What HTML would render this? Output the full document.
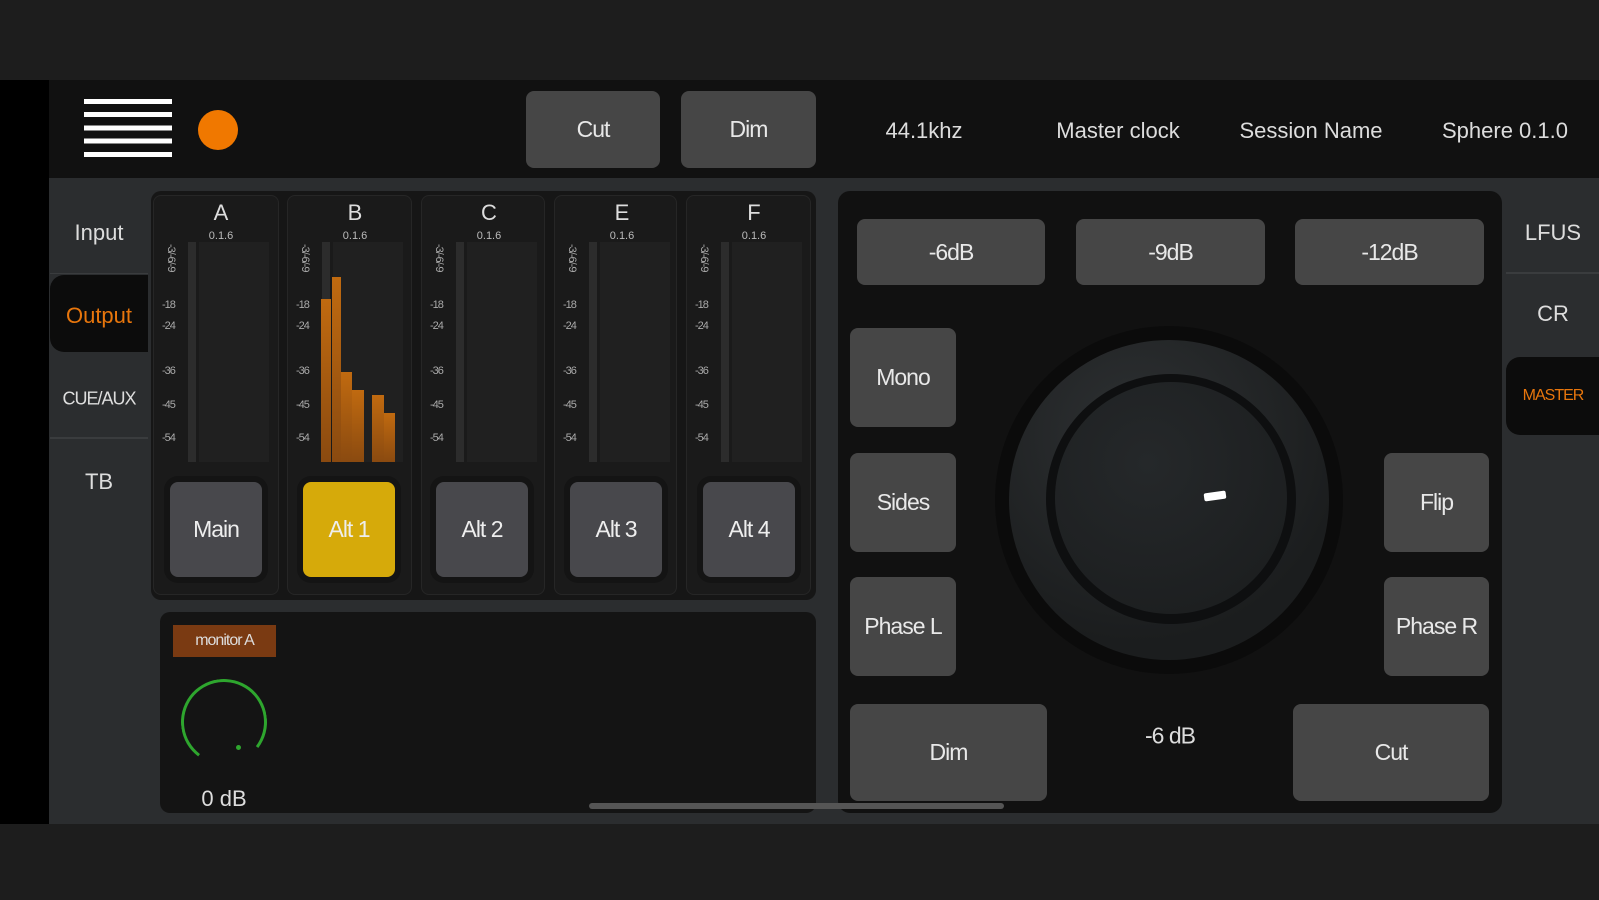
<!DOCTYPE html>
<html><head><meta charset="utf-8"><style>
*{margin:0;padding:0;box-sizing:border-box}
body{width:1599px;height:900px;background:#1d1d1d;position:relative;overflow:hidden;font-family:"Liberation Sans",sans-serif;color:#ddd}
.a{position:absolute}
.btn{position:absolute;background:#464646;border-radius:8px;display:flex;align-items:center;justify-content:center;color:#e8e8e8;font-size:23px;letter-spacing:-1px}
.t{position:absolute;transform:translate(-50%,-50%);white-space:nowrap}
.ch{position:absolute;top:195px;height:400px;background:#1a1a1a;border-radius:8px;border:1px solid #262626}
.sc{position:absolute;font-size:11px;color:#aaa;letter-spacing:-1px}
.mb{position:absolute;top:242px;height:220px;background:#202020}
.cb{position:absolute;top:482px;width:92px;height:95px;background:#48484c;border-radius:8px;display:flex;align-items:center;justify-content:center;font-size:23px;color:#eee;letter-spacing:-1px;box-shadow:0 0 0 6px #141414}
</style></head><body>
<div class="a" style="left:0;top:80px;width:49px;height:744px;background:#000"></div>
<div class="a" style="left:49px;top:80px;width:1550px;height:98px;background:#111"></div>
<div class="a" style="left:49px;top:178px;width:1550px;height:646px;background:#2b2d2f"></div>
<!-- hamburger -->
<div class="a" style="left:84px;top:99px;width:88px;height:62px;background:repeating-linear-gradient(#fff 0 5px,transparent 5px 13.2px)"></div>
<div class="a" style="left:198px;top:110px;width:40px;height:40px;border-radius:50%;background:#f07800"></div>
<div class="btn" style="left:526px;top:91px;width:134px;height:77px">Cut</div>
<div class="btn" style="left:681px;top:91px;width:135px;height:77px">Dim</div>
<div class="t" style="left:924px;top:131px;font-size:22px">44.1khz</div>
<div class="t" style="left:1118px;top:131px;font-size:22px">Master clock</div>
<div class="t" style="left:1311px;top:131px;font-size:22px">Session Name</div>
<div class="t" style="left:1505px;top:131px;font-size:22px">Sphere 0.1.0</div>
<!-- left tabs -->
<div class="a" style="left:50px;top:275px;width:98px;height:77px;background:#0c0c0c;border-radius:14px 0 0 14px"></div>
<div class="a" style="left:50px;top:273px;width:98px;height:1px;background:#3a3c3e"></div>
<div class="a" style="left:50px;top:437px;width:98px;height:2px;background:#3a3c3e"></div>
<div class="t" style="left:99px;top:233px;font-size:22px">Input</div>
<div class="t" style="left:99px;top:316px;font-size:22px;color:#e8760c">Output</div>
<div class="t" style="left:99px;top:399px;font-size:18px;letter-spacing:-1px">CUE/AUX</div>
<div class="t" style="left:99px;top:482px;font-size:22px">TB</div>
<!-- right tabs -->
<div class="a" style="left:1506px;top:357px;width:93px;height:78px;background:#0c0c0c;border-radius:14px 0 0 14px"></div>
<div class="a" style="left:1506px;top:272px;width:93px;height:2px;background:#3a3c3e"></div>
<div class="t" style="left:1553px;top:233px;font-size:22px">LFUS</div>
<div class="t" style="left:1553px;top:314px;font-size:22px">CR</div>
<div class="t" style="left:1553px;top:396px;font-size:16px;color:#e8760c;letter-spacing:-1px">MASTER</div>
<!-- meter panel -->
<div class="a" style="left:151px;top:191px;width:665px;height:409px;background:#161616;border-radius:10px"></div>
<div class="ch" style="left:153px;width:126px"></div>
<div class="ch" style="left:287px;width:125px"></div>
<div class="ch" style="left:421px;width:124px"></div>
<div class="ch" style="left:554px;width:123px"></div>
<div class="ch" style="left:686px;width:125px"></div>
<div id="meters"></div>
<div class="cb" style="left:170px">Main</div>
<div class="cb" style="left:303px;background:#d6aa0a">Alt 1</div>
<div class="cb" style="left:436px">Alt 2</div>
<div class="cb" style="left:570px">Alt 3</div>
<div class="cb" style="left:703px">Alt 4</div>
<!-- lower panel -->
<div class="a" style="left:160px;top:612px;width:656px;height:201px;background:#141414;border-radius:10px"></div>
<div class="a" style="left:173px;top:625px;width:103px;height:32px;background:#7a3a12;font-size:16px;color:#ddd;display:flex;align-items:center;justify-content:center;letter-spacing:-1px">monitor A</div>
<div class="a" style="left:181px;top:679px;width:86px;height:86px;border-radius:50%;border:3px solid #2ea62e;border-bottom-color:transparent;transform:rotate(-8deg)"></div>
<div class="a" style="left:236px;top:745px;width:5px;height:5px;border-radius:50%;background:#2ea62e"></div>
<div class="t" style="left:224px;top:799px;font-size:22px">0 dB</div>
<!-- right panel -->
<div class="a" style="left:838px;top:191px;width:664px;height:622px;background:#111;border-radius:12px"></div>
<div class="btn" style="left:857px;top:219px;width:188px;height:66px">-6dB</div>
<div class="btn" style="left:1076px;top:219px;width:189px;height:66px">-9dB</div>
<div class="btn" style="left:1295px;top:219px;width:189px;height:66px">-12dB</div>
<div class="btn" style="left:850px;top:328px;width:106px;height:99px">Mono</div>
<div class="btn" style="left:850px;top:453px;width:106px;height:99px">Sides</div>
<div class="btn" style="left:850px;top:577px;width:106px;height:99px">Phase L</div>
<div class="btn" style="left:1384px;top:453px;width:105px;height:99px">Flip</div>
<div class="btn" style="left:1384px;top:577px;width:105px;height:99px">Phase R</div>
<div class="btn" style="left:850px;top:704px;width:197px;height:97px">Dim</div>
<div class="btn" style="left:1293px;top:704px;width:196px;height:97px">Cut</div>
<div class="t" style="left:1170px;top:736px;font-size:23px;letter-spacing:-1px">-6 dB</div>
<div class="a" style="left:995px;top:326px;width:348px;height:348px;border-radius:50%;background:#0b0b0b"></div>
<div class="a" style="left:1009px;top:340px;width:320px;height:320px;border-radius:50%;background:radial-gradient(circle at 40% 30%,#2e3133,#1b1d1e 70%)"></div>
<div class="a" style="left:1046px;top:374px;width:250px;height:250px;border-radius:50%;background:#0e0f10"></div>
<div class="a" style="left:1055px;top:382px;width:232px;height:232px;border-radius:50%;background:radial-gradient(circle at 40% 35%,#25282a,#1a1c1d)"></div>
<div class="a" style="left:1204px;top:492px;width:22px;height:8px;background:#fff;border-radius:2px;transform:rotate(-8deg)"></div>
<div class="a" style="left:589px;top:803px;width:415px;height:6px;background:#555;border-radius:3px"></div>
<script>
var xs=[153,287,421,554,686],names=["A","B","C","E","F"],h="";
var ys=[["-18",306],["-24",327],["-36",372],["-45",406],["-54",439]];
xs.forEach(function(x,i){
h+='<div class="t" style="left:'+(x+68)+'px;top:213px;font-size:22px">'+names[i]+'</div>';
h+='<div class="t" style="left:'+(x+68)+'px;top:236px;font-size:11px;color:#bbb">0.1.6</div>';
h+='<div class="mb" style="left:'+(x+46)+'px;width:70px"></div>';
h+='<div class="a" style="left:'+(x+35)+'px;top:242px;width:8px;height:220px;background:#2c2c2c"></div>';
h+='<div class="sc" style="left:'+(x+8)+'px;top:244px;transform:rotate(90deg);transform-origin:8px 8px">-3/-6/-9</div>';
ys.forEach(function(y){h+='<div class="sc" style="left:'+(x+9)+'px;top:'+(y[1]-7)+'px">'+y[0]+'</div>';});
});
var bars=[[321,10,299],[332,9,277],[341,11,372],[352,12,390],[372,12,395],[384,11,413]];
bars.forEach(function(b){h+='<div class="a" style="left:'+b[0]+'px;top:'+b[2]+'px;width:'+b[1]+'px;height:'+(462-b[2])+'px;background:linear-gradient(#c06a10,#8a4a10)"></div>';});
document.getElementById("meters").innerHTML=h;
</script>
</body></html>
